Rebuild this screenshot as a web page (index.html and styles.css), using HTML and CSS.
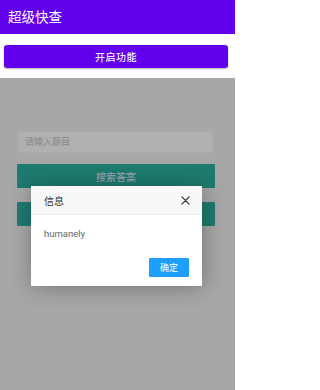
FILE: index.html
```html
<!DOCTYPE html>
<html lang="zh">
<head>
<meta charset="utf-8">
<link rel="stylesheet" href="styles.css">
</head>
<body>
<header class="appbar">超级快查</header>
<div class="toolbar">
  <div class="primary-btn">开启功能</div>
</div>
<main class="web">
  <div class="content">
    <div class="field">请输入题目</div>
    <div class="teal-btn">搜索答案</div>
    <div class="teal-btn second"></div>
  </div>
  <div class="overlay"></div>
  <div class="dialog">
    <div class="dialog-title">
      <span>信息</span>
      <svg class="close" viewBox="0 0 10 10" width="9" height="9"><path d="M1 1 L9 9 M9 1 L1 9" stroke="#2b2b2b" stroke-width="1.3" fill="none" stroke-linecap="round"/></svg>
    </div>
    <div class="dialog-body">humanely</div>
    <div class="dialog-actions"><div class="ok-btn">确定</div></div>
  </div>
</main>
</body>
</html>
```
FILE: styles.css
```css
* { box-sizing: border-box; }
html, body { margin: 0; padding: 0; }
body {
  width: 235px;
  height: 390px;
  overflow: hidden;
  background: #fff;
  font-family: Roboto, "Noto Sans CJK SC", sans-serif;
}
.appbar {
  height: 34px;
  background: #6200ee;
  color: #fff;
  font-size: 13.5px;
  font-weight: 400;
  line-height: 34px;
  padding-left: 8px;
}
.toolbar {
  height: 44px;
  padding: 11px 7px 0 4px;
  background: #fff;
}
.primary-btn {
  height: 23px;
  background: #6200ee;
  border-radius: 3px;
  color: #f4eeff;
  font-size: 10px;
  font-weight: 500;
  display: flex;
  align-items: center;
  justify-content: center;
  box-shadow: 0 1px 2px rgba(0,0,0,0.3);
  letter-spacing: 0.5px;
}
.web {
  position: relative;
  height: 312px;
  background: #f0f0f0;
}
.content {
  padding: 53px 20px 0 17px;
  display: flex;
  flex-direction: column;
}
.field {
  height: 22px;
  margin: 0 2px 0 1px;
  background: #fdfdfd;
  border: 1px solid #f6f6f6;
  color: #c4c4c4;
  font-size: 9px;
  line-height: 20px;
  padding-left: 6px;
}
.teal-btn {
  margin-top: 11px;
  height: 24px;
  background: #2bb1a0;
  color: #eef;
  font-size: 10px;
  display: flex;
  align-items: center;
  justify-content: center;
  border-radius: 1px;
}
.teal-btn.second { margin-top: 14px; }
.overlay {
  position: absolute;
  inset: 0;
  background: rgba(0,0,0,0.3);
}
.dialog {
  position: absolute;
  left: 31px;
  top: 108px;
  width: 171px;
  background: #fff;
  box-shadow: 1px 1px 22px rgba(0,0,0,0.3);
  border-radius: 1px;
}
.dialog-title {
  height: 29px;
  background: #f8f8f8;
  border-bottom: 1px solid #eee;
  display: flex;
  align-items: center;
  justify-content: space-between;
  padding: 0 12px 0 13px;
  color: #333;
  font-size: 10px;
}
.dialog-body {
  padding: 13px 13px;
  font-size: 9.5px;
  line-height: 12px;
  color: #666;
}
.dialog-actions {
  display: flex;
  justify-content: flex-end;
  padding: 5px 13px 9px;
}
.ok-btn {
  width: 40px;
  height: 19px;
  background: #1e9fff;
  color: #fff;
  font-size: 9px;
  border-radius: 1px;
  display: flex;
  align-items: center;
  justify-content: center;
}
```
